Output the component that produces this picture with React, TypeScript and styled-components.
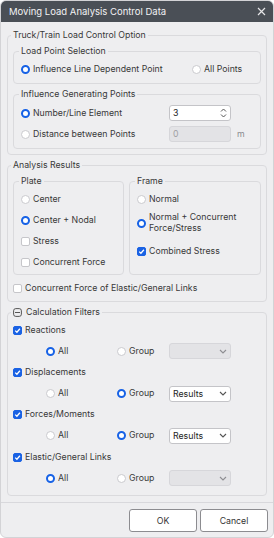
import styled, { createGlobalStyle } from "styled-components";

const GlobalStyle = createGlobalStyle`
  html, body {
    margin: 0;
    padding: 0;
    background: #fff;
  }
  body {
    font-family: Inter, "Noto Sans", sans-serif;
  }
`;

const Window = styled.div`
  box-sizing: border-box;
  width: 274px;
  height: 538px;
  display: flex;
  flex-direction: column;
  background: #eeeef0;
  border: 1px solid #d3d3d6;
  border-radius: 6px;
  overflow: hidden;
  font-size: 8.75px;
  color: #383838;
`;

const TitleBar = styled.div`
  height: 21px;
  flex: none;
  display: flex;
  align-items: center;
  justify-content: space-between;
  padding: 0 7px 0 8px;
  background: #4a4f56;
  color: #f2f2f4;
  font-size: 9.5px;
`;

const Body = styled.div`
  flex: 1;
  display: flex;
  flex-direction: column;
  gap: 4px;
  padding: 7px 6px 6px;
`;

const Group = styled.fieldset<{ $pad?: string; $gap?: number }>`
  margin: 0;
  min-width: 0;
  border: 1px solid #dadadd;
  border-radius: 4px;
  padding: ${(p) => p.$pad ?? "3px 5px 5px"};
  display: flex;
  flex-direction: column;
  gap: ${(p) => p.$gap ?? 4}px;
`;

const Legend = styled.legend`
  padding: 0 2px;
  margin-left: -2px;
  line-height: 13px;
  display: flex;
  align-items: center;
  gap: 4px;
`;

const Option = styled.label<{ $tall?: boolean }>`
  display: flex;
  align-items: center;
  gap: 3px;
  line-height: ${(p) => (p.$tall ? 11 : 13)}px;
  min-height: 13px;
  margin-bottom: ${(p) => (p.$tall ? 5 : 0)}px;
`;

const Radio = styled.span<{ $on?: boolean }>`
  box-sizing: border-box;
  flex: none;
  width: 9px;
  height: 9px;
  border-radius: 50%;
  background: #fff;
  border: ${(p) => (p.$on ? "2.5px solid #1762e6" : "1px solid #cacace")};
`;

const Box = styled.span<{ $on?: boolean }>`
  box-sizing: border-box;
  flex: none;
  width: 9px;
  height: 9px;
  border-radius: 2px;
  display: flex;
  align-items: center;
  justify-content: center;
  background: ${(p) => (p.$on ? "#1a62e4" : "#fff")};
  border: 1px solid ${(p) => (p.$on ? "#1a62e4" : "#c6c6ca")};
`;

const PointRow = styled.div`
  display: grid;
  grid-template-columns: 171px auto;
  align-items: center;
`;

const InputRow = styled.div`
  display: grid;
  grid-template-columns: 148px 62px auto;
  align-items: center;
  height: 16px;
`;

const Field = styled.div<{ $off?: boolean }>`
  box-sizing: border-box;
  height: 16px;
  display: flex;
  align-items: center;
  justify-content: space-between;
  padding: 0 3px 0 3px;
  border: 1px solid ${(p) => (p.$off ? "#d6d6da" : "#c4c4c8")};
  border-radius: 3px;
  background: ${(p) => (p.$off ? "#e3e3e6" : "#fff")};
  color: ${(p) => (p.$off ? "#a0a0a4" : "#222")};
`;

const Unit = styled.span`
  margin-left: 6px;
  color: #8a8a8e;
`;

const Columns = styled.div`
  display: grid;
  grid-template-columns: 111px 1fr;
  gap: 5px;
`;

const SubRow = styled.div`
  display: grid;
  grid-template-columns: 71px 52px 62px;
  align-items: center;
  height: 16px;
  padding-left: 33px;
`;

const FilterRow = styled.div`
  display: flex;
  align-items: center;
  height: 16px;
`;

const Footer = styled.div`
  flex: none;
  display: flex;
  justify-content: flex-end;
  gap: 3px;
  padding: 6px 5px 6px;
  border-top: 1px solid #d8d8dc;
`;

const Button = styled.button`
  width: 68px;
  height: 23px;
  background: #fff;
  border: 1px solid #8c8c90;
  border-radius: 3px;
  font-family: inherit;
  font-size: 8.75px;
  color: #333;
  padding: 0;
`;

const Check = () => (
  <svg width="7" height="7" viewBox="0 0 7 7">
    <path d="M1.2 3.6 L2.9 5.2 L5.9 1.8" fill="none" stroke="#fff" strokeWidth="1.3" />
  </svg>
);

const Chevron = ({ off }: { off?: boolean }) => (
  <svg width="8" height="5" viewBox="0 0 8 5">
    <path d="M1 1 L4 4 L7 1" fill="none" stroke={off ? "#8e8e92" : "#555"} strokeWidth="1.1" />
  </svg>
);

const Spin = () => (
  <svg width="7" height="12" viewBox="0 0 7 12">
    <path d="M1 4.5 L3.5 2 L6 4.5 M1 7.5 L3.5 10 L6 7.5" fill="none" stroke="#555" strokeWidth="1" />
  </svg>
);

const Close = () => (
  <svg width="9" height="9" viewBox="0 0 9 9">
    <path d="M1 1 L8 8 M8 1 L1 8" stroke="#e6e6e8" strokeWidth="1.2" />
  </svg>
);

const Collapse = () => (
  <svg width="9" height="9" viewBox="0 0 9 9">
    <rect x="0.6" y="0.6" width="7.8" height="7.8" rx="2.2" fill="none" stroke="#555" strokeWidth="1" />
    <path d="M2 4.5 H7" stroke="#555" strokeWidth="1" />
  </svg>
);

function RadioOpt({ on, label }: { on?: boolean; label: string }) {
  return (
    <Option>
      <Radio $on={on} />
      {label}
    </Option>
  );
}

function CheckOpt({ on, label }: { on?: boolean; label: string }) {
  return (
    <Option>
      <Box $on={on}>{on && <Check />}</Box>
      {label}
    </Option>
  );
}

const filters = [
  { name: "Reactions", group: false },
  { name: "Displacements", group: true },
  { name: "Forces/Moments", group: true },
  { name: "Elastic/General Links", group: false },
];

export default function App() {
  return (
    <>
      <GlobalStyle />
      <Window>
        <TitleBar>
          <span>Moving Load Analysis Control Data</span>
          <Close />
        </TitleBar>
        <Body>
          <Group>
            <Legend>Truck/Train Load Control Option</Legend>
            <Group $pad="5px 7px 7px">
              <Legend>Load Point Selection</Legend>
              <PointRow>
                <RadioOpt on label="Influence Line Dependent Point" />
                <RadioOpt label="All Points" />
              </PointRow>
            </Group>
            <Group $pad="4px 7px 6px" $gap={5}>
              <Legend>Influence Generating Points</Legend>
              <InputRow>
                <RadioOpt on label="Number/Line Element" />
                <Field>
                  <span>3</span>
                  <Spin />
                </Field>
              </InputRow>
              <InputRow>
                <RadioOpt label="Distance between Points" />
                <Field $off>
                  <span>0</span>
                </Field>
                <Unit>m</Unit>
              </InputRow>
            </Group>
          </Group>

          <Group $pad="3px 5px 6px" $gap={7}>
            <Legend>Analysis Results</Legend>
            <Columns>
              <Group $pad="5px 7px 5px" $gap={8}>
                <Legend>Plate</Legend>
                <RadioOpt label="Center" />
                <RadioOpt on label="Center + Nodal" />
                <CheckOpt label="Stress" />
                <CheckOpt label="Concurrent Force" />
              </Group>
              <Group $pad="5px 7px 5px" $gap={6}>
                <Legend>Frame</Legend>
                <RadioOpt label="Normal" />
                <Option $tall>
                  <Radio $on />
                  <span>
                    Normal + Concurrent
                    <br />
                    Force/Stress
                  </span>
                </Option>
                <CheckOpt on label="Combined Stress" />
              </Group>
            </Columns>
            <CheckOpt label="Concurrent Force of Elastic/General Links" />
          </Group>

          <Group $pad="3px 5px 9px" $gap={5.2}>
            <Legend>
              <Collapse />
              Calculation Filters
            </Legend>
            {filters.map((f) => (
              <div key={f.name} style={{ display: "contents" }}>
                <FilterRow>
                  <CheckOpt on label={f.name} />
                </FilterRow>
                <SubRow>
                  <RadioOpt on={!f.group} label="All" />
                  <RadioOpt on={f.group} label="Group" />
                  <Field $off={!f.group}>
                    <span>{f.group ? "Results" : ""}</span>
                    <Chevron off={!f.group} />
                  </Field>
                </SubRow>
              </div>
            ))}
          </Group>
        </Body>
        <Footer>
          <Button>OK</Button>
          <Button>Cancel</Button>
        </Footer>
      </Window>
    </>
  );
}
